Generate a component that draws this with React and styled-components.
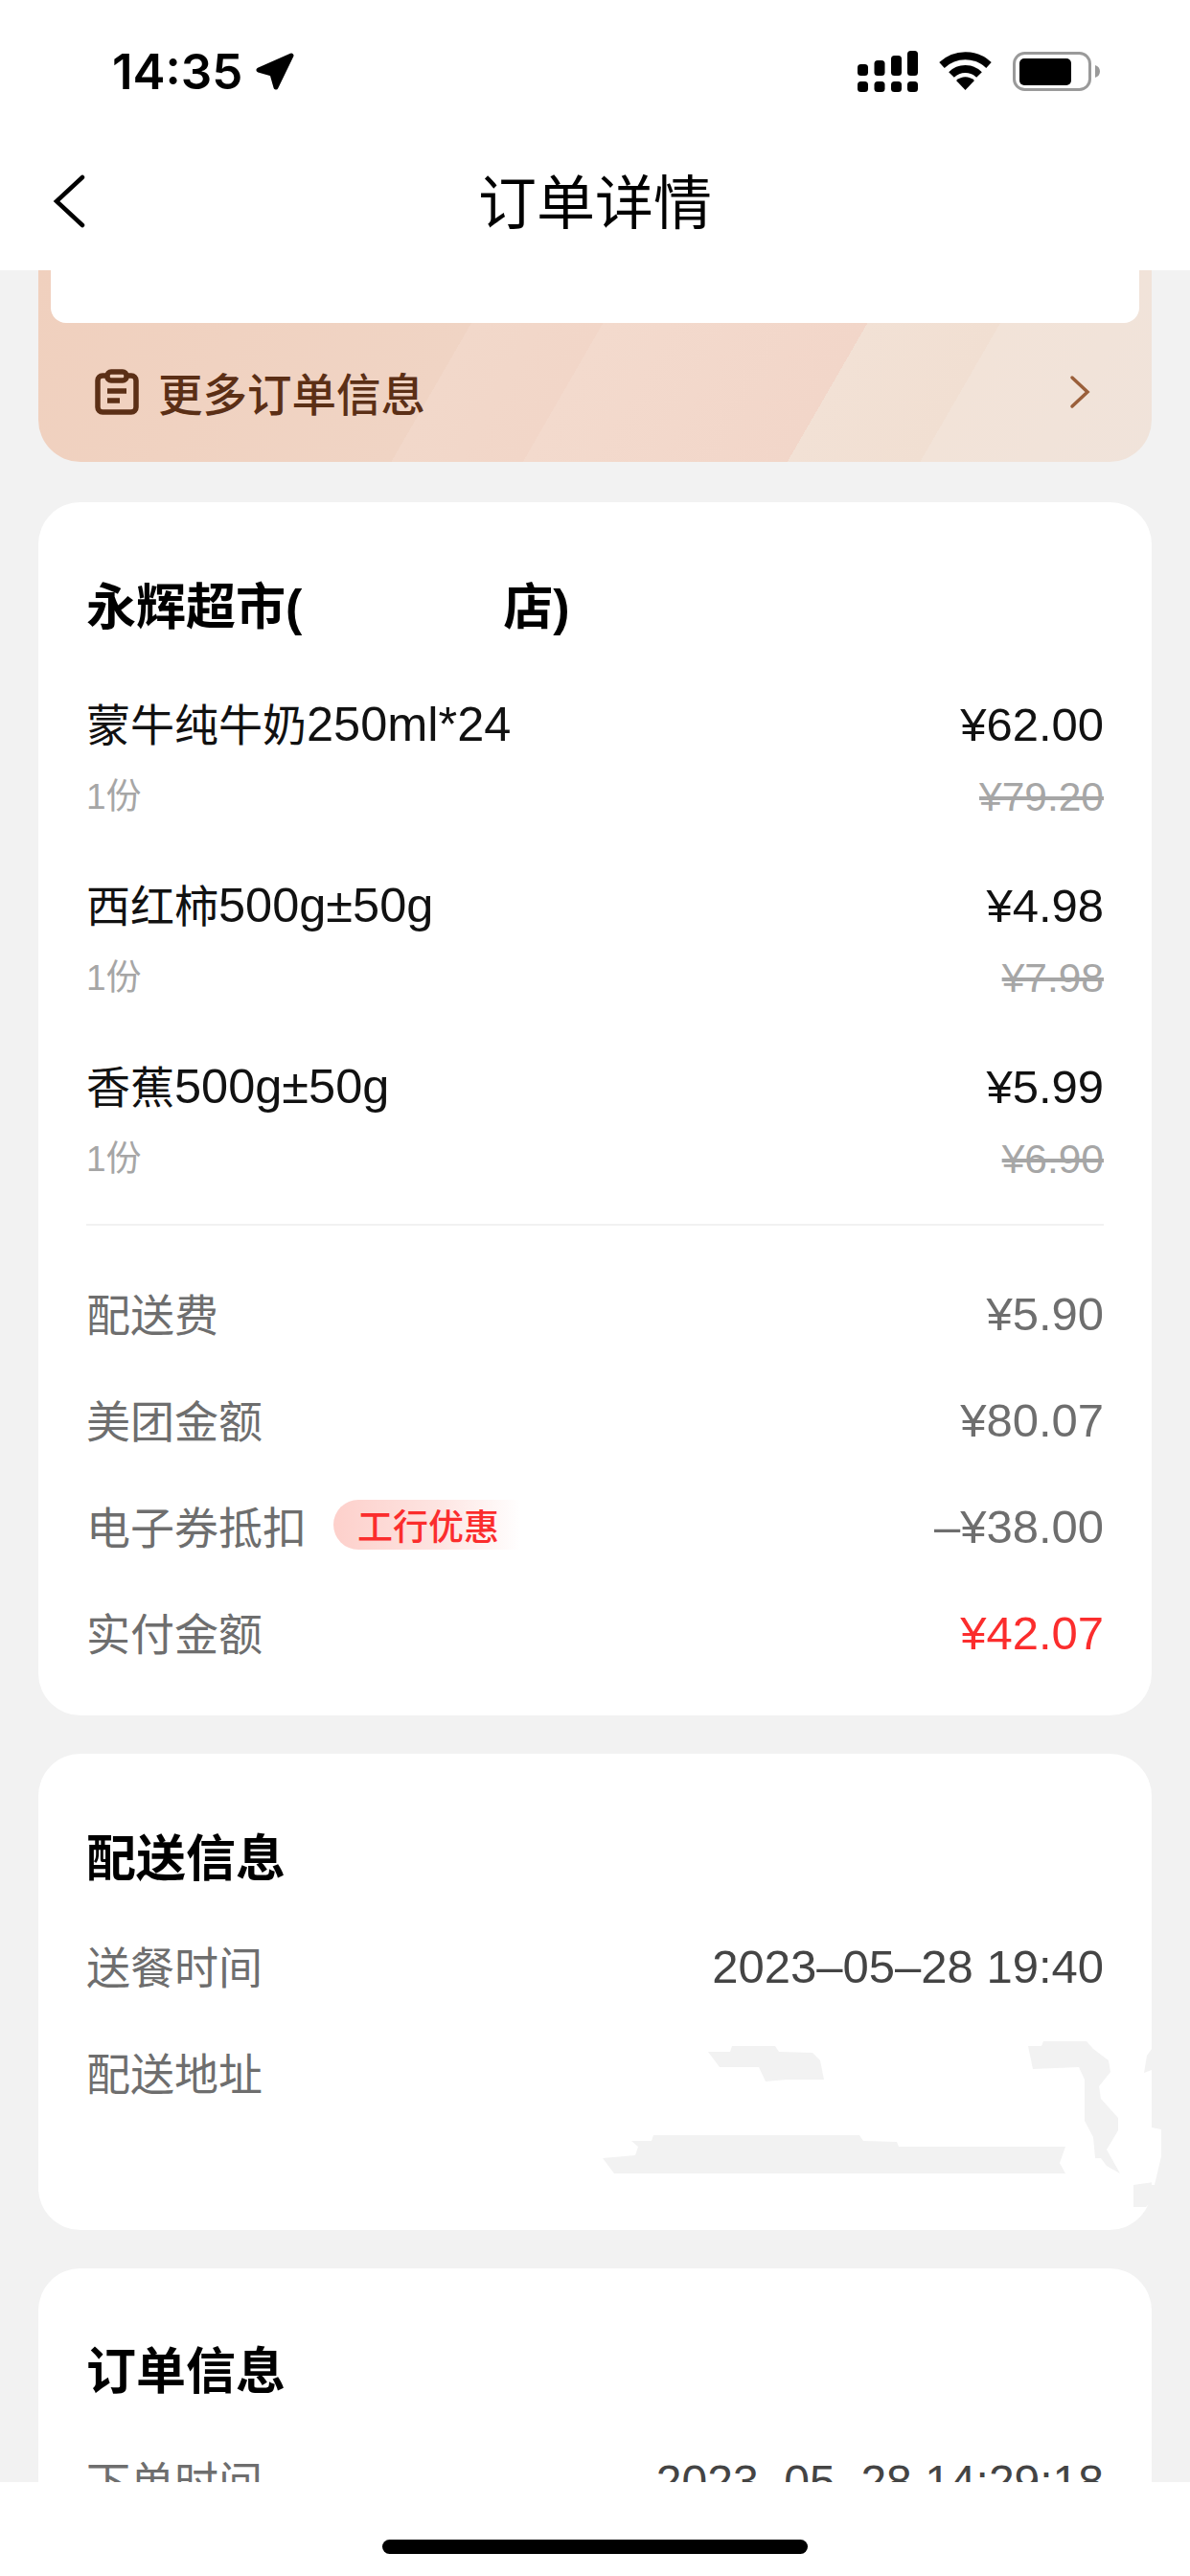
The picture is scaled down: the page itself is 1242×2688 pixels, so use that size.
import React from "react";
import styled, { createGlobalStyle } from "styled-components";

const GlobalStyle = createGlobalStyle`
  html, body {
    margin: 0;
    padding: 0;
    background: #f2f2f2;
  }
  * {
    box-sizing: border-box;
  }
`;

const fontStack = `"Liberation Sans", "Noto Sans CJK SC", sans-serif`;

const Screen = styled.div`
  width: 1242px;
  height: 2688px;
  display: flex;
  flex-direction: column;
  overflow: hidden;
  background: #f2f2f2;
  font-family: ${fontStack};
`;

const TopBar = styled.header`
  flex: none;
  height: 282px;
  background: #fff;
  display: flex;
  flex-direction: column;
`;

const StatusBar = styled.div`
  height: 148px;
  padding: 0 94px 0 117px;
  display: flex;
  align-items: center;
  justify-content: space-between;
`;

const Clock = styled.div`
  display: flex;
  align-items: center;
  gap: 14px;
  font-family: Inter, sans-serif;
  font-weight: 600;
  font-size: 51px;
  color: #000;
`;

const StatusIcons = styled.div`
  display: flex;
  align-items: center;
  gap: 22px;
`;

const NavBar = styled.div`
  position: relative;
  height: 134px;
  display: flex;
  align-items: center;
  justify-content: center;
  padding-bottom: 16px;
`;

const BackButton = styled.div`
  position: absolute;
  left: 55px;
  top: 34px;
  line-height: 0;
`;

const Title = styled.h1`
  margin: 0;
  font-size: 61px;
  font-weight: 400;
  color: #000;
`;

const Scroll = styled.main`
  flex: 1;
  min-height: 0;
  overflow: hidden;
  padding: 0 40px;
  display: flex;
  flex-direction: column;
  gap: 40px;
`;

const Banner = styled.section`
  flex: none;
  height: 200px;
  margin-bottom: 2px;
  border-radius: 0 0 44px 44px;
  padding: 0 13px;
  display: flex;
  flex-direction: column;
  background: linear-gradient(
    120deg,
    #f0d0be 0,
    #f0d4c4 419px,
    #f2d8ca 419px,
    #f2d6c8 538px,
    #f3dacd 538px,
    #f2d6c9 777px,
    #f2e1d5 777px,
    #f1dfd2 897px,
    #f2e3d8 897px,
    #f0e3da 100%
  );
`;

const BannerInner = styled.div`
  flex: none;
  height: 55px;
  background: #fff;
  border-radius: 0 0 16px 16px;
`;

const BannerRow = styled.div`
  flex: 1;
  display: flex;
  align-items: center;
  justify-content: space-between;
  padding: 0 50px 2px 46px;
`;

const BannerLabel = styled.div`
  display: flex;
  align-items: center;
  gap: 20px;
  font-size: 46.5px;
  font-weight: 500;
  color: #5b2f16;
`;

const Card = styled.section`
  position: relative;
  flex: none;
  background: #fff;
  border-radius: 44px;
  padding: 0 50px;
  height: ${(p) => p.$height}px;
`;

const CardTitle = styled.h2`
  margin: 0;
  font-size: 52px;
  font-weight: 700;
  line-height: 60px;
  color: #000;
  padding-top: ${(p) => p.$top}px;
  display: flex;
`;

const Masked = styled.span`
  display: inline-block;
  width: 210px;
`;

const Latin = styled.span`
  font-size: 50.5px;
`;

const Product = styled.div`
  margin-top: ${(p) => (p.$first ? 64 : 60)}px;
  display: grid;
  grid-template-columns: 1fr auto;
  row-gap: 22px;
`;

const ProductName = styled.div`
  font-size: 46px;
  line-height: 56px;
  color: #111;
`;

const ProductPrice = styled(ProductName)`
  text-align: right;
  font-size: 49px;
`;

const Qty = styled.div`
  font-size: 37px;
  line-height: 50px;
  color: #a6a6a6;
`;

const OldPrice = styled(Qty)`
  text-align: right;
  font-size: 42.5px;
  text-decoration: line-through;
`;

const Divider = styled.div`
  height: 2px;
  background: #f1f1f1;
  margin-top: 42px;
  margin-bottom: 62px;
`;

const InfoRow = styled.div`
  display: flex;
  align-items: center;
  justify-content: space-between;
  height: 60px;
  margin-top: ${(p) => p.$gap || 0}px;
  font-size: 46px;
  color: ${(p) => (p.$dark ? "#444" : "#6e6e6e")};
`;

const RowLabel = styled.div`
  display: flex;
  align-items: center;
  gap: 28px;
  padding-bottom: 4px;
  color: #6e6e6e;
`;

const Value = styled.span`
  font-size: ${(p) => p.$size || 49}px;
  color: ${(p) => p.$color || "inherit"};
`;

const Promo = styled.span`
  display: inline-flex;
  align-items: center;
  height: 52px;
  width: 196px;
  padding-left: 25px;
  border-radius: 26px 0 0 26px;
  font-size: 37px;
  font-weight: 500;
  color: #fb2d2d;
  background: linear-gradient(90deg, #fdd0cb 0%, #fde4e1 55%, #ffffff 100%);
`;

const Smudge = styled.svg`
  position: absolute;
  left: 0;
  top: 0;
  overflow: visible;
`;

const HomeBar = styled.footer`
  flex: none;
  height: 98px;
  background: #fff;
  display: flex;
  justify-content: center;
  padding-top: 60px;
`;

const HomeIndicator = styled.div`
  width: 444px;
  height: 15px;
  border-radius: 8px;
  background: #000;
`;

const items = [
  { cjk: "蒙牛纯牛奶", latin: "250ml*24", price: "¥62.00", old: "¥79.20" },
  { cjk: "西红柿", latin: "500g±50g", price: "¥4.98", old: "¥7.98" },
  { cjk: "香蕉", latin: "500g±50g", price: "¥5.99", old: "¥6.90" },
];

function SignalIcon() {
  const bars = [
    [0, 14],
    [17.5, 10],
    [35, 5],
    [52, 0],
  ];
  return (
    <svg width="63" height="43" viewBox="0 0 63 43">
      {bars.map(([x, y]) => (
        <g key={x} fill="#000">
          <rect x={x} y={y} width="11" height={26 - y} rx="3.5" />
          <rect x={x} y="32" width="11" height="11" rx="3.5" />
        </g>
      ))}
    </svg>
  );
}

function WifiIcon() {
  return (
    <svg width="55" height="40" viewBox="0 0 55 40" fill="none" stroke="#000" strokeWidth="8">
      <path d="M3 14 C17 1 38 1 52 14" />
      <path d="M13 24 C21 16 34 16 42 24" />
      <path d="M18 30 L27.5 40 L37 30 C31 25 24 25 18 30 Z" fill="#000" stroke="none" />
    </svg>
  );
}

function BatteryIcon() {
  return (
    <svg width="91" height="41" viewBox="0 0 91 41">
      <rect x="1.5" y="1.5" width="79" height="38" rx="11" fill="none" stroke="#9a9a9a" strokeWidth="3" />
      <rect x="7" y="7" width="54" height="28" rx="5" fill="#000" />
      <path d="M86 14 C89 15 91 17 91 20.5 C91 24 89 26 86 27 Z" fill="#9a9a9a" />
    </svg>
  );
}

export default function App() {
  return (
    <>
      <GlobalStyle />
      <Screen>
        <TopBar>
          <StatusBar>
            <Clock>
              14:35
              <svg width="40" height="39" viewBox="0 0 40 39">
                <path d="M3 18 L37 3 L21 36 L17 22 Z" fill="#000" stroke="#000" strokeWidth="5" strokeLinejoin="round" />
              </svg>
            </Clock>
            <StatusIcons>
              <SignalIcon />
              <WifiIcon />
              <BatteryIcon />
            </StatusIcons>
          </StatusBar>
          <NavBar>
            <BackButton>
              <svg width="34" height="56" viewBox="0 0 34 56" fill="none" stroke="#000" strokeWidth="4.5" strokeLinecap="round">
                <path d="M31 3 L4 28 L31 53" />
              </svg>
            </BackButton>
            <Title>订单详情</Title>
          </NavBar>
        </TopBar>
        <Scroll>
          <Banner>
            <BannerInner />
            <BannerRow>
              <BannerLabel>
                <svg width="46" height="48" viewBox="0 0 46 48" fill="none" stroke="#5b2f16" strokeWidth="5.5">
                  <rect x="3" y="7" width="40" height="38" rx="5" />
                  <rect x="13" y="3" width="20" height="9" rx="4" fill="#efd0bd" />
                  <path d="M13 23 H33 M13 33 H26" />
                </svg>
                更多订单信息
              </BannerLabel>
              <svg width="24" height="36" viewBox="0 0 24 36" fill="none" stroke="#9a5f3a" strokeWidth="3.5" strokeLinecap="round">
                <path d="M4 3 L20 18 L4 33" />
              </svg>
            </BannerRow>
          </Banner>

          <Card $height={1266}>
            <CardTitle $top={80}>
              永辉超市(<Masked />店)
            </CardTitle>
            {items.map((item, i) => (
              <Product key={item.cjk} $first={i === 0}>
                <ProductName>
                  {item.cjk}
                  <Latin>{item.latin}</Latin>
                </ProductName>
                <ProductPrice>{item.price}</ProductPrice>
                <Qty>1份</Qty>
                <OldPrice>{item.old}</OldPrice>
              </Product>
            ))}
            <Divider />
            <InfoRow>
              <RowLabel>配送费</RowLabel>
              <Value>¥5.90</Value>
            </InfoRow>
            <InfoRow $gap={51}>
              <RowLabel>美团金额</RowLabel>
              <Value>¥80.07</Value>
            </InfoRow>
            <InfoRow $gap={51}>
              <RowLabel>
                电子券抵扣
                <Promo>工行优惠</Promo>
              </RowLabel>
              <Value>–¥38.00</Value>
            </InfoRow>
            <InfoRow $gap={51}>
              <RowLabel>实付金额</RowLabel>
              <Value $color="#fb2d2d">¥42.07</Value>
            </InfoRow>
          </Card>

          <Card $height={497}>
            <CardTitle $top={80}>配送信息</CardTitle>
            <InfoRow $gap={52} $dark>
              <RowLabel>送餐时间</RowLabel>
              <Value>2023–05–28 19:40</Value>
            </InfoRow>
            <InfoRow $gap={51}>
              <RowLabel>配送地址</RowLabel>
            </InfoRow>
            {/* smudges left where the address was painted out, in page coordinates */}
            <Smudge width="1172" height="497" viewBox="40 1830 1172 497" fill="#f2f2f2">
              <path d="M739 2141 L762 2141 L764 2135 L809 2135 L813 2141 L848 2142 L856 2150 L860 2170 L821 2170 L799 2172 L792 2157 L751 2157 Z" />
              <path d="M629 2252 L663 2249 L666 2240 L659 2234 L680 2234 L682 2228 L897 2228 L901 2234 L936 2235 L938 2240 L1112 2240 L1106 2257 L1112 2268 L641 2268 Z" />
              <path d="M1073 2135 L1087 2135 L1089 2130 L1134 2130 L1141 2138 L1157 2150 L1159 2162 L1147 2177 L1149 2190 L1167 2210 L1167 2223 L1155 2243 L1169 2268 L1155 2260 L1149 2252 L1143 2252 L1141 2230 L1132 2213 L1132 2170 L1126 2157 L1078 2159 Z" />
              <path d="M1202 2138 L1197 2145 L1194 2163 L1202 2160 Z" />
              <path d="M1183 2280 L1204 2277 L1204 2295 L1196 2303 L1183 2303 Z" />
              <path d="M1202 2220 L1212 2222 L1212 2250 L1205 2280 L1202 2280 Z" fill="#fff" />
            </Smudge>
          </Card>

          <Card $height={400}>
            <CardTitle $top={78}>订单信息</CardTitle>
            <InfoRow $gap={54} $dark>
              <RowLabel>下单时间</RowLabel>
              <Value $size={48}>2023–05–28 14:29:18</Value>
            </InfoRow>
          </Card>
        </Scroll>
        <HomeBar>
          <HomeIndicator />
        </HomeBar>
      </Screen>
    </>
  );
}
